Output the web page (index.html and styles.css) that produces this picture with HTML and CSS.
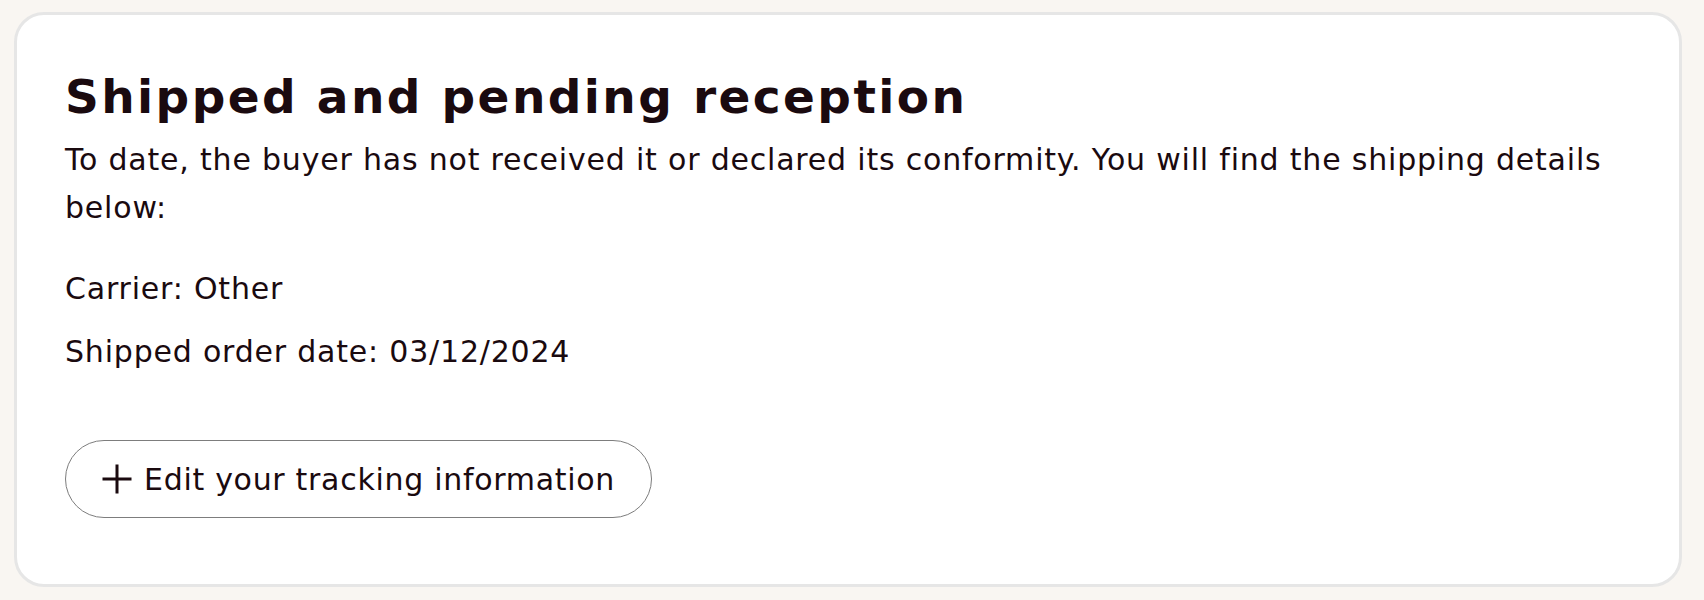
FILE: index.html
```html
<!DOCTYPE html>
<html lang="en">
<head>
<meta charset="utf-8">
<title>Order status</title>
<link rel="stylesheet" href="styles.css">
</head>
<body>
  <section class="status-card">
    <h1 class="status-title">Shipped and pending reception</h1>
    <p class="status-text">To date, the buyer has not received it or declared its conformity. You will find the shipping details below:</p>
    <p class="detail detail-carrier">Carrier: Other</p>
    <p class="detail">Shipped order date: 03/12/2024</p>
    <button class="edit-btn" type="button">
      <svg class="edit-btn__icon" viewBox="0 0 30 30" width="30" height="30" aria-hidden="true">
        <path d="M15 0.5v29M0.5 15h29" stroke="currentColor" stroke-width="3" fill="none"/>
      </svg>
      <span>Edit your tracking information</span>
    </button>
  </section>
</body>
</html>
```

FILE: styles.css
```css
* { box-sizing: border-box; }

body {
  margin: 0;
  background: #f9f6f2;
  font-family: "DejaVu Sans", Inter, sans-serif;
  color: #1a0a0f;
}

.status-card {
  margin: 12px 22px 0 14px;
  height: 575px;
  background: #fff;
  border: 3px solid #e6e6e6;
  border-radius: 30px;
  padding: 55px 48px 0 48px;
}

.status-title {
  margin: 0;
  font-size: 47px;
  line-height: 54px;
  font-weight: 700;
  letter-spacing: 2.4px;
}

.status-text {
  margin: 12px 0 0;
  font-size: 30px;
  line-height: 48px;
  letter-spacing: 0.8px;
}

.detail {
  margin: 15px 0 0;
  font-size: 30px;
  line-height: 48px;
  letter-spacing: 0.8px;
}

.detail-carrier { margin-top: 33px; }

.edit-btn {
  margin-top: 64px;
  display: inline-flex;
  align-items: center;
  gap: 12px;
  height: 78px;
  padding: 0 36px;
  background: #fff;
  border: 1.5px solid #7d7d7d;
  border-radius: 40px;
  font-family: inherit;
  font-size: 30px;
  letter-spacing: 0.7px;
  color: inherit;
  cursor: pointer;
}

.edit-btn__icon { flex: none; }
```
